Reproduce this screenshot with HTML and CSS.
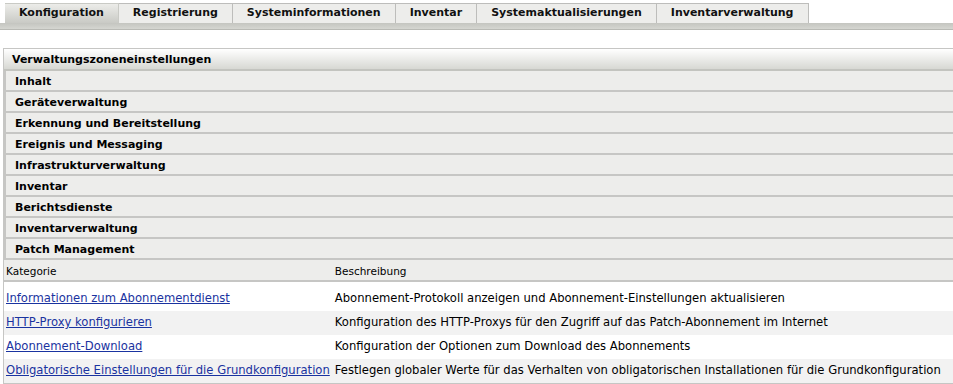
FILE: index.html
```html
<!DOCTYPE html>
<html lang="de">
<head>
    <meta charset="UTF-8">
    <title>Konfiguration</title>
    <link rel="stylesheet" href="styles.css">
</head>
<body>

<nav class="tabs">
    <a class="tab active" href="#">Konfiguration</a>
    <a class="tab" href="#">Registrierung</a>
    <a class="tab" href="#">Systeminformationen</a>
    <a class="tab" href="#">Inventar</a>
    <a class="tab" href="#">Systemaktualisierungen</a>
    <a class="tab" href="#">Inventarverwaltung</a>
</nav>
<div class="tab-rule"></div>

<div class="panel">
    <div class="panel-head">Verwaltungszoneneinstellungen</div>
    <ul class="sections">
        <li>Inhalt</li>
        <li>Geräteverwaltung</li>
        <li>Erkennung und Bereitstellung</li>
        <li>Ereignis und Messaging</li>
        <li>Infrastrukturverwaltung</li>
        <li>Inventar</li>
        <li>Berichtsdienste</li>
        <li>Inventarverwaltung</li>
        <li>Patch Management</li>
    </ul>
    <table class="settings">
        <thead>
            <tr>
                <th class="col-cat">Kategorie</th>
                <th>Beschreibung</th>
            </tr>
        </thead>
        <tbody>
            <tr>
                <td><a href="#">Informationen zum Abonnementdienst</a></td>
                <td>Abonnement-Protokoll anzeigen und Abonnement-Einstellungen aktualisieren</td>
            </tr>
            <tr>
                <td><a href="#">HTTP-Proxy konfigurieren</a></td>
                <td>Konfiguration des HTTP-Proxys für den Zugriff auf das Patch-Abonnement im Internet</td>
            </tr>
            <tr>
                <td><a href="#">Abonnement-Download</a></td>
                <td>Konfiguration der Optionen zum Download des Abonnements</td>
            </tr>
            <tr>
                <td><a href="#">Obligatorische Einstellungen für die Grundkonfiguration</a></td>
                <td>Festlegen globaler Werte für das Verhalten von obligatorischen Installationen für die Grundkonfiguration</td>
            </tr>
        </tbody>
    </table>
</div>

</body>
</html>
```

FILE: styles.css
```css
body {
    margin: 0;
    font-family: 'DejaVu Sans', sans-serif;
    font-size: 11.6px;
    color: #000;
    background-color: #fff;
}

.tabs {
    display: flex;
    padding: 3px 0 0 5px;
}

.tab {
    display: block;
    padding: 2px 14px 3px 14px;
    font-weight: bold;
    font-size: 11px;
    line-height: 14px;
    color: #111;
    text-decoration: none;
    background-color: #ededeb;
    border: 1px solid #bdbdbb;
    border-bottom: none;
    border-left: none;
}

.tab.active {
    background: linear-gradient(#ecece9, #c9cac5);
    border-color: #c9cac5;
}

.tab-rule {
    height: 6px;
    background: linear-gradient(#c4c5c0, #d5d6d1);
    border-bottom: 1px solid #b9bab5;
}

.panel {
    margin: 18px 0 0 3px;
    border-top: 1px solid #c6c6c4;
    border-left: 1px solid #c6c6c4;
}

.panel-head {
    padding: 3px 8px 2px 8px;
    line-height: 15px;
    font-size: 11px;
    font-weight: bold;
    background: linear-gradient(#ffffff, #d7d8d3);
    border-bottom: 2px solid #c3c4bf;
}

.sections {
    list-style: none;
    margin: 0;
    padding: 0;
}

.sections li {
    padding: 3px 8px 1px 9px;
    line-height: 15px;
    font-size: 11px;
    font-weight: bold;
    background-color: #ededeb;
    border-left: 2px solid #c6c6c4;
    border-bottom: 2px solid #c6c6c4;
}

.settings {
    width: 100%;
    border-collapse: collapse;
}

.settings th {
    text-align: left;
    font-weight: normal;
    font-size: 10.5px;
    line-height: 13px;
    padding: 5px 2px 2px 2px;
    background-color: #ededeb;
    border-bottom: 2px solid #c6c6c4;
}

.settings .col-cat {
    width: 1%;
}

.settings td {
    padding: 4px 3px 5px 2px;
    line-height: 15px;
    white-space: nowrap;
}

.settings tbody tr:nth-child(even) td {
    background-color: #f2f2f2;
}

.settings tbody tr:first-child td {
    padding-top: 9px;
}

.settings tbody tr:last-child td {
    border-bottom: 2px solid #c6c6c4;
}

.settings a {
    color: #1a33a0;
}
```
